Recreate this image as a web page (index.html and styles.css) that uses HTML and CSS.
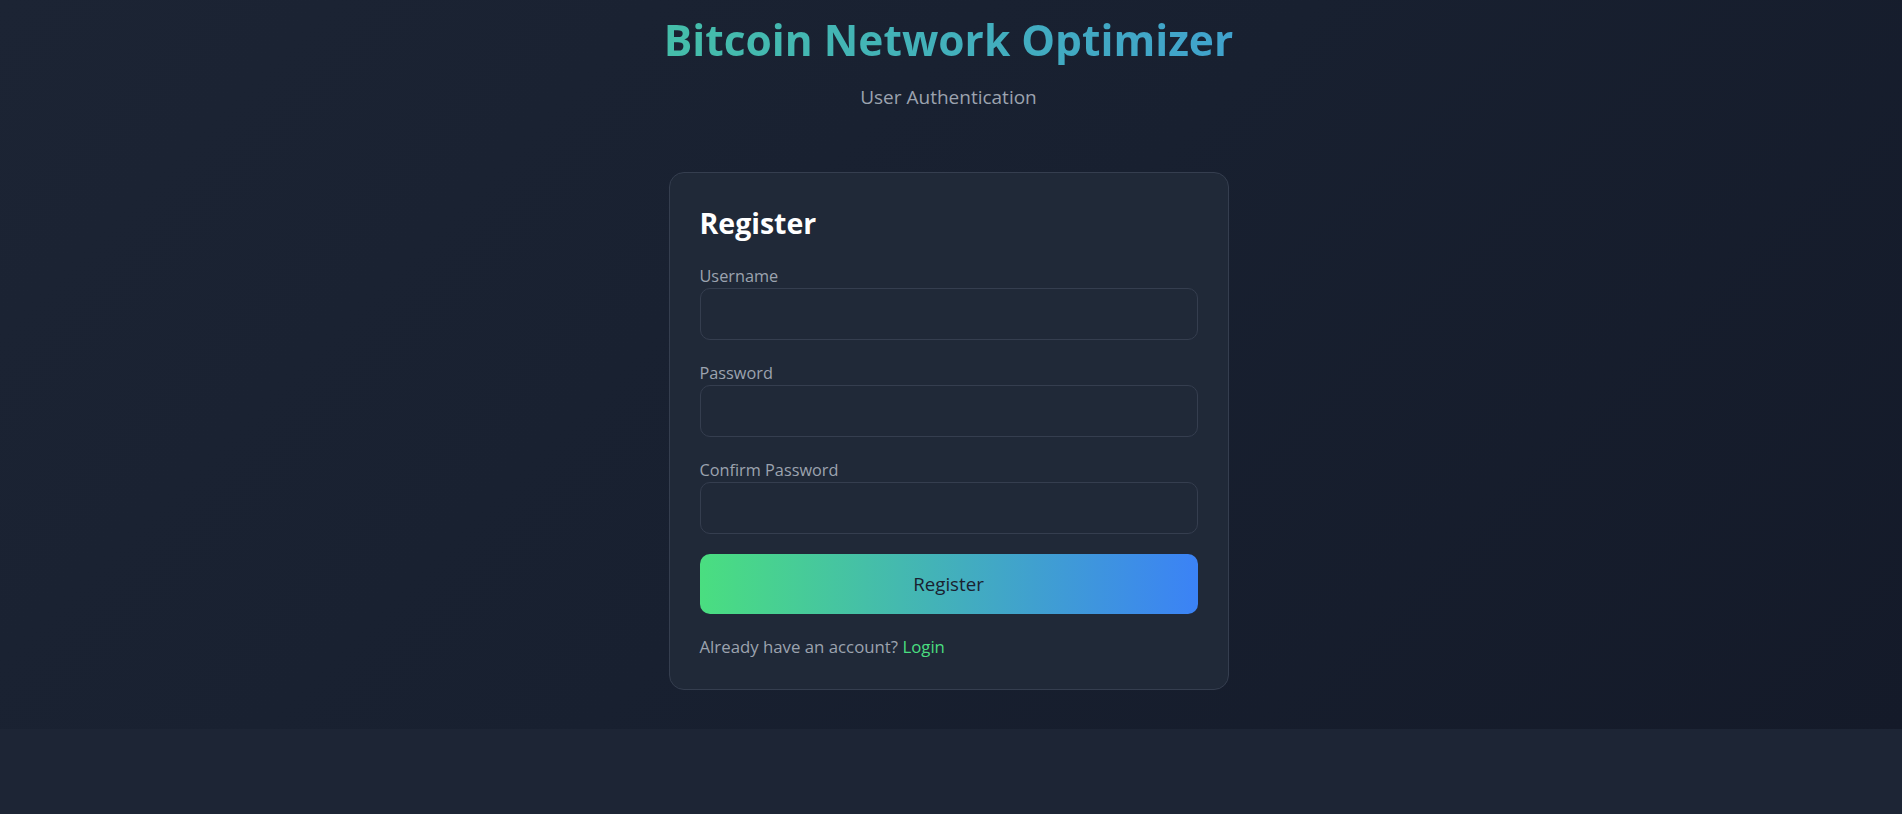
FILE: index.html
```html
<!DOCTYPE html>
<html lang="en">
<head>
<meta charset="utf-8">
<title>Bitcoin Network Optimizer - Register</title>
<link rel="stylesheet" href="styles.css">
</head>
<body>
<div class="page">
  <header class="header">
    <h1 class="title">Bitcoin Network Optimizer</h1>
    <p class="subtitle">User Authentication</p>
  </header>
  <main class="card">
    <h2 class="card-title">Register</h2>
    <form class="form">
      <div class="field">
        <label class="label" for="username">Username</label>
        <input class="input" id="username" type="text">
      </div>
      <div class="field">
        <label class="label" for="password">Password</label>
        <input class="input" id="password" type="password">
      </div>
      <div class="field">
        <label class="label" for="confirm">Confirm Password</label>
        <input class="input" id="confirm" type="password">
      </div>
      <button class="btn" type="button">Register</button>
    </form>
    <p class="switch">Already have an account? <a class="link" href="#">Login</a></p>
  </main>
</div>
</body>
</html>
```
FILE: styles.css
```css
* { box-sizing: border-box; }
html, body { margin: 0; padding: 0; }
body {
  background: #1d2535;
  font-family: "Open Sans", "Noto Sans", sans-serif;
  color: #9ca3af;
  min-height: 814px;
}
.page {
  background: linear-gradient(135deg, #1c2434 0%, #182030 50%, #141a29 100%);
  padding: 15px 5px 39px 0;
}
.header { text-align: center; }
.title {
  margin: 0 0 17px;
  font-size: 42.5px;
  line-height: 50px;
  font-weight: 700;
  background: linear-gradient(to right, #4ade80, #3b82f6);
  -webkit-background-clip: text;
  background-clip: text;
  color: transparent;
}
.subtitle {
  margin: 0 0 60px;
  font-size: 19px;
  line-height: 30px;
  color: #9ca3af;
}
.card {
  width: 560px;
  margin: 0 auto;
  background: #202938;
  border: 1px solid #353e4f;
  border-radius: 15px;
  padding: 30px;
}
.card-title {
  margin: 0 0 20px;
  font-size: 28.5px;
  line-height: 40px;
  font-weight: 700;
  color: #ffffff;
}
.form { display: flex; flex-direction: column; }
.field { display: flex; flex-direction: column; margin-bottom: 20px; }
.label {
  font-size: 16.3px;
  line-height: 23px;
  padding-top: 2px;
  color: #9ca3af;
}
.input {
  width: 100%;
  height: 52px;
  padding: 10px 15px;
  font: inherit;
  font-size: 19px;
  color: #e5e7eb;
  background: #202938;
  border: 1px solid #353e4f;
  border-radius: 10px;
  outline: none;
}
.btn {
  height: 60px;
  width: 100%;
  border: 0;
  border-radius: 10px;
  background: linear-gradient(to right, #4ade80, #3b82f6);
  color: #1a2130;
  font-family: inherit;
  font-size: 18.7px;
  line-height: 30px;
  cursor: pointer;
}
.switch {
  margin: 20px 0 0;
  font-size: 16.8px;
  line-height: 25px;
  color: #9ca3af;
}
.link { color: #4ade80; text-decoration: none; }
```
